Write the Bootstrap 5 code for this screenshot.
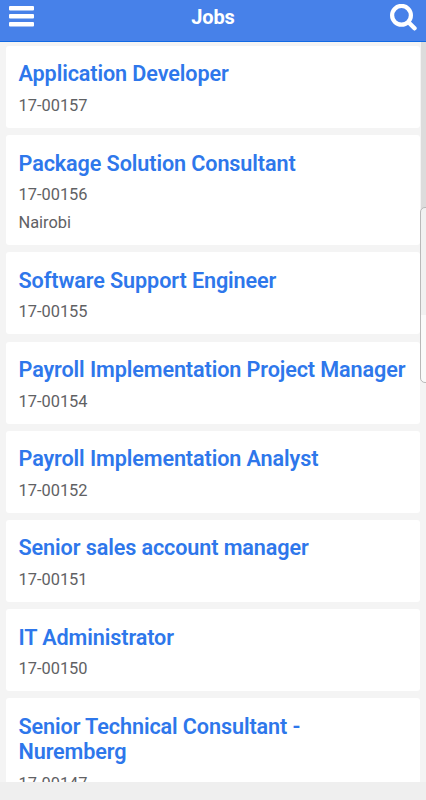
<!DOCTYPE html>
<html lang="en">
<head>
<meta charset="utf-8">
<meta name="viewport" content="width=device-width, initial-scale=1">
<title>Jobs</title>
<link href="https://cdn.jsdelivr.net/npm/bootstrap@5.3.0/dist/css/bootstrap.min.css" rel="stylesheet">
<style>
body{font-family:Roboto,sans-serif;background:#efefef;height:800px}
.topbar{height:42px;background:#4781e9;border-bottom:1px solid #1169e3;padding:0 9px}
.topbar h1{font-size:20px;line-height:24px;font-weight:700;letter-spacing:-.1px;padding:5px 0 0 2px}
.topbar button{line-height:0}
.menu-btn{margin-top:6px}
.search-btn{margin-top:4px}
.jobs{height:739.5px;background:#f4f4f4;padding:4px 6px 0;gap:7.2px}
.job{border-radius:3px;padding:15.4px 12.5px 0;height:82px;flex:none;color:#5f6164}
.job-located{height:110.1px}
.job-tall{height:107px}
.job h2{font-size:21.6px;letter-spacing:-.1px;line-height:25.2px;font-weight:600;color:#2e77eb;margin:0;white-space:nowrap}
.job p{font-size:16.4px;font-weight:400;line-height:28.4px;margin:5.3px 0 0}
.job p + p{margin-top:0}
.track{top:42px;right:0;width:5px;height:174px;background:#dcdcdc}
.handle{top:207px;left:420px;width:12px;height:176px;border:1px solid #b9b9b9;border-radius:5px;background:linear-gradient(#f1f1f1 107px,#fafafa 107px)}
</style>
<script src="https://cdn.jsdelivr.net/npm/bootstrap@5.3.0/dist/js/bootstrap.bundle.min.js"></script>
</head>
<body class="position-relative overflow-hidden">
<header class="topbar d-flex justify-content-between align-items-start text-white">
<button class="btn p-0 border-0 menu-btn" aria-label="Menu"><svg width="25" height="21" viewBox="0 0 25 21" fill="#fff"><rect width="25" height="4.4" rx="1"/><rect y="8" width="25" height="4.4" rx="1"/><rect y="16" width="25" height="4.6" rx="1"/></svg></button>
<h1 class="mb-0">Jobs</h1>
<button class="btn p-0 border-0 search-btn" aria-label="Search"><svg width="27" height="27" viewBox="0 0 27 27" fill="none" stroke="#fff" stroke-linecap="round"><circle cx="11.5" cy="11.3" r="9.4" stroke-width="4.2"/><path d="M18.5 18.3l6 6" stroke-width="4.4"/></svg></button>
</header>
<main class="jobs d-flex flex-column overflow-hidden">
<article class="job bg-white"><h2>Application Developer</h2><p>17-00157</p></article>
<article class="job job-located bg-white"><h2>Package Solution Consultant</h2><p>17-00156</p><p>Nairobi</p></article>
<article class="job bg-white"><h2>Software Support Engineer</h2><p>17-00155</p></article>
<article class="job bg-white"><h2>Payroll Implementation Project Manager</h2><p>17-00154</p></article>
<article class="job bg-white"><h2>Payroll Implementation Analyst</h2><p>17-00152</p></article>
<article class="job bg-white"><h2>Senior sales account manager</h2><p>17-00151</p></article>
<article class="job bg-white"><h2>IT Administrator</h2><p>17-00150</p></article>
<article class="job job-tall bg-white"><h2>Senior Technical Consultant -<br>Nuremberg</h2><p>17-00147</p></article>
</main>
<div class="track position-absolute"></div>
<div class="handle position-absolute"></div>
</body>
</html>
